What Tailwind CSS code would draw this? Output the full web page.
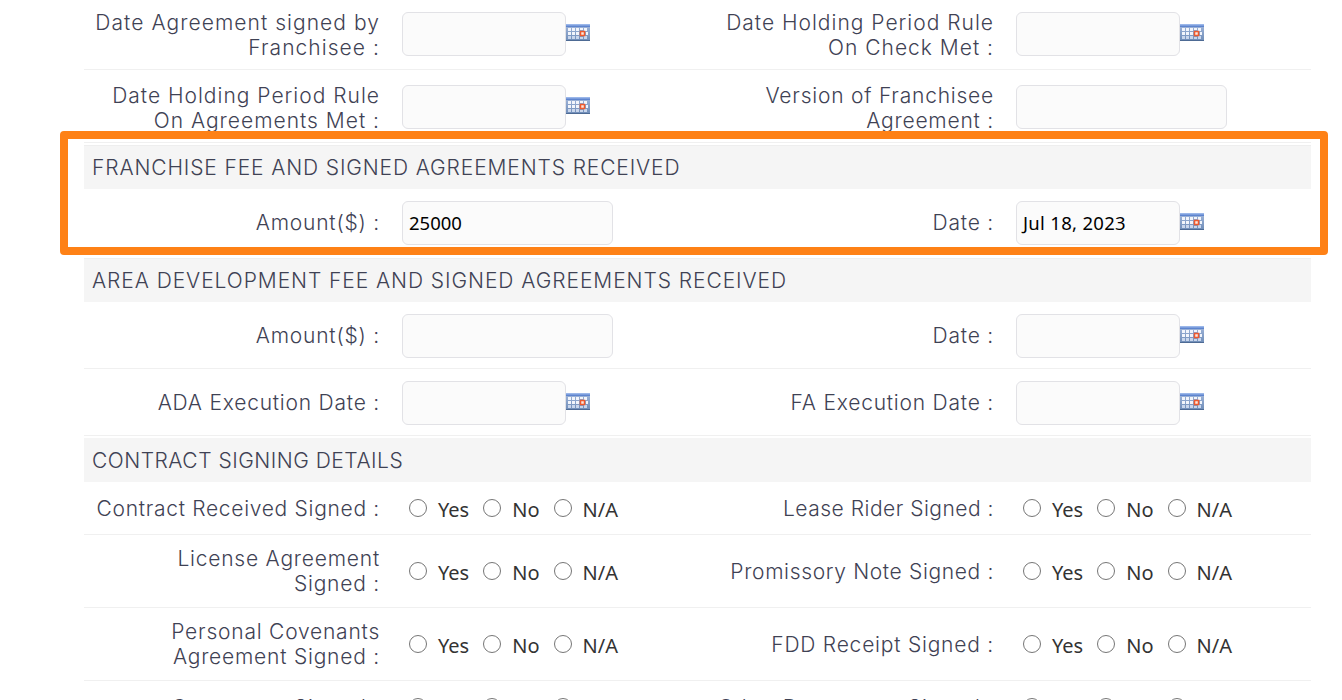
<!DOCTYPE html>
<html lang="en">

<head>
    <meta charset="UTF-8">
    <title>Franchise Agreements</title>
    <script src="https://cdn.jsdelivr.net/npm/@tailwindcss/browser@4"></script>
</head>

<body class="bg-white h-[700px] overflow-hidden relative">
    <svg width="0" height="0" class="absolute">
        <defs>
            <linearGradient id="calBody" x1="0" y1="0" x2="0" y2="1">
                <stop offset="0" stop-color="#a3b8dc" />
                <stop offset="1" stop-color="#6f8db8" />
            </linearGradient>
            <linearGradient id="calTop" x1="0" y1="0" x2="0" y2="1">
                <stop offset="0" stop-color="#a9c3f0" />
                <stop offset="1" stop-color="#4f78c8" />
            </linearGradient>
            <symbol id="cal" viewBox="0 0 24 17">
                <rect x="0" y="0" width="24" height="17" fill="url(#calBody)" />
                <rect x="0" y="0" width="24" height="3" fill="url(#calTop)" />
                <g fill="#f2f5fb">
                    <rect x="2" y="4" width="3" height="3" /><rect x="6" y="4" width="3" height="3" /><rect x="10" y="4" width="3" height="3" /><rect x="14" y="4" width="3" height="2" /><rect x="18" y="4" width="3" height="3" />
                    <rect x="2" y="8" width="3" height="3" /><rect x="6" y="8" width="3" height="3" /><rect x="10" y="8" width="3" height="3" /><rect x="20" y="8" width="2" height="3" />
                </g>
                <g fill="#c9d6ec">
                    <rect x="2" y="12" width="3" height="3" /><rect x="6" y="12" width="3" height="3" /><rect x="10" y="12" width="3" height="3" /><rect x="14" y="13" width="3" height="2" /><rect x="18" y="12" width="3" height="3" />
                </g>
                <rect x="14.5" y="7.5" width="4" height="4" fill="#fde7dc" stroke="#ee5a2e" stroke-width="1.5" />
                <rect x="0" y="16" width="24" height="1" fill="#4d6a94" />
            </symbol>
        </defs>
    </svg>

    <!-- highlight box around the franchise fee section -->
    <div class="absolute left-[60px] top-[131px] w-[1268px] h-[124px] border-[8px] border-[#fe8116] rounded-[4px]"></div>

    <div class="ml-[84px] w-[1227px] font-['Inter',sans-serif] text-[21px] tracking-[0.78px] leading-[25px] font-light text-[#3f4254]">

        <div class="grid grid-cols-[318px_296px_318px_295px] h-[70px] pt-[12px] border-b border-[#f0f0f0]">
            <div class="text-right pr-[22px] -mt-[2px] tracking-[1.05px]">Date Agreement signed by<br>Franchisee :</div>
            <div class="flex"><div class="w-[164px] h-[44px] border border-[#e2e2e6] bg-[#fbfbfb] rounded-[6px]"></div><svg class="w-[24px] h-[17px] mt-[12px]"><use href="#cal" /></svg></div>
            <div class="text-right pr-[22px] -mt-[2px] tracking-[1px]">Date Holding Period Rule<br>On Check Met :</div>
            <div class="flex"><div class="w-[164px] h-[44px] border border-[#e2e2e6] bg-[#fbfbfb] rounded-[6px]"></div><svg class="w-[24px] h-[17px] mt-[12px]"><use href="#cal" /></svg></div>
        </div>

        <div class="grid grid-cols-[318px_296px_318px_295px] h-[73px] mb-[2px] pt-[15px] border-b border-[#f0f0f0]">
            <div class="text-right pr-[22px] -mt-[2px] tracking-[1px]">Date Holding Period Rule<br>On Agreements Met :</div>
            <div class="flex"><div class="w-[164px] h-[44px] border border-[#e2e2e6] bg-[#fbfbfb] rounded-[6px]"></div><svg class="w-[24px] h-[17px] mt-[12px]"><use href="#cal" /></svg></div>
            <div class="text-right pr-[22px] -mt-[2px]">Version of Franchisee<br>Agreement :</div>
            <div><div class="w-[211px] h-[44px] border border-[#e2e2e6] bg-[#fbfbfb] rounded-[6px]"></div></div>
        </div>

        <div class="h-[44px] bg-[#f5f5f5] border-t border-[#eeeeee] pl-[8px] pb-[1px] flex items-center tracking-[0.87px]">FRANCHISE FEE AND SIGNED AGREEMENTS RECEIVED</div>

        <div class="grid grid-cols-[318px_296px_318px_295px] h-[69px] pt-[12px]">
            <div class="text-right pr-[22px] pt-[9px]">Amount($) :</div>
            <div><div class="w-[211px] h-[44px] border border-[#e2e2e6] bg-[#fbfbfb] rounded-[6px] px-[6px] pb-[2px] flex items-center font-['Noto_Sans',sans-serif] font-normal tracking-normal text-[18.5px] text-black">25000</div></div>
            <div class="text-right pr-[22px] pt-[9px]">Date :</div>
            <div class="flex"><div class="w-[164px] h-[44px] border border-[#e2e2e6] bg-[#fbfbfb] rounded-[6px] px-[6px] pb-[2px] flex items-center font-['Noto_Sans',sans-serif] font-normal tracking-[0.3px] text-[18.5px] text-black">Jul 18, 2023</div><svg class="w-[24px] h-[17px] mt-[12px]"><use href="#cal" /></svg></div>
        </div>

        <div class="h-[44px] bg-[#f5f5f5] border-t border-[#eeeeee] pl-[8px] pb-[1px] flex items-center tracking-[0.93px]">AREA DEVELOPMENT FEE AND SIGNED AGREEMENTS RECEIVED</div>

        <div class="grid grid-cols-[318px_296px_318px_295px] h-[67px] pt-[12px] border-b border-[#f0f0f0]">
            <div class="text-right pr-[22px] pt-[9px]">Amount($) :</div>
            <div><div class="w-[211px] h-[44px] border border-[#e2e2e6] bg-[#fbfbfb] rounded-[6px]"></div></div>
            <div class="text-right pr-[22px] pt-[9px]">Date :</div>
            <div class="flex"><div class="w-[164px] h-[44px] border border-[#e2e2e6] bg-[#fbfbfb] rounded-[6px]"></div><svg class="w-[24px] h-[17px] mt-[12px]"><use href="#cal" /></svg></div>
        </div>

        <div class="grid grid-cols-[318px_296px_318px_295px] h-[67px] mb-[2px] pt-[12px] border-b border-[#f0f0f0]">
            <div class="text-right pr-[22px] pt-[9px]">ADA Execution Date :</div>
            <div class="flex"><div class="w-[164px] h-[44px] border border-[#e2e2e6] bg-[#fbfbfb] rounded-[6px]"></div><svg class="w-[24px] h-[17px] mt-[12px]"><use href="#cal" /></svg></div>
            <div class="text-right pr-[22px] pt-[9px]">FA Execution Date :</div>
            <div class="flex"><div class="w-[164px] h-[44px] border border-[#e2e2e6] bg-[#fbfbfb] rounded-[6px]"></div><svg class="w-[24px] h-[17px] mt-[12px]"><use href="#cal" /></svg></div>
        </div>

        <div class="h-[44px] bg-[#f5f5f5] pl-[8px] flex items-center tracking-[0.5px]">CONTRACT SIGNING DETAILS</div>

        <div class="grid grid-cols-[318px_296px_318px_295px] h-[53px] items-center border-b border-[#f0f0f0]">
            <div class="text-right pr-[22px] tracking-[0.7px]">Contract Received Signed :</div>
            <div class="flex items-center gap-[14px] pl-[7px] pt-[2px] font-['Noto_Sans',sans-serif] font-normal tracking-normal text-[20px] text-[#333]"><label class="flex items-center gap-[11px]"><span class="w-[18px] h-[18px] -mt-[3px] rounded-full border border-[#767676]"></span>Yes</label><label class="flex items-center gap-[11px]"><span class="w-[18px] h-[18px] -mt-[3px] rounded-full border border-[#767676]"></span>No</label><label class="flex items-center gap-[11px]"><span class="w-[18px] h-[18px] -mt-[3px] rounded-full border border-[#767676]"></span>N/A</label></div>
            <div class="text-right pr-[22px] tracking-[0.5px]">Lease Rider Signed :</div>
            <div class="flex items-center gap-[14px] pl-[7px] pt-[2px] font-['Noto_Sans',sans-serif] font-normal tracking-normal text-[20px] text-[#333]"><label class="flex items-center gap-[11px]"><span class="w-[18px] h-[18px] -mt-[3px] rounded-full border border-[#767676]"></span>Yes</label><label class="flex items-center gap-[11px]"><span class="w-[18px] h-[18px] -mt-[3px] rounded-full border border-[#767676]"></span>No</label><label class="flex items-center gap-[11px]"><span class="w-[18px] h-[18px] -mt-[3px] rounded-full border border-[#767676]"></span>N/A</label></div>
        </div>

        <div class="grid grid-cols-[318px_296px_318px_295px] h-[73px] items-center border-b border-[#f0f0f0]">
            <div class="text-right pr-[22px]">License Agreement<br>Signed :</div>
            <div class="flex items-center gap-[14px] pl-[7px] pt-[2px] font-['Noto_Sans',sans-serif] font-normal tracking-normal text-[20px] text-[#333]"><label class="flex items-center gap-[11px]"><span class="w-[18px] h-[18px] -mt-[3px] rounded-full border border-[#767676]"></span>Yes</label><label class="flex items-center gap-[11px]"><span class="w-[18px] h-[18px] -mt-[3px] rounded-full border border-[#767676]"></span>No</label><label class="flex items-center gap-[11px]"><span class="w-[18px] h-[18px] -mt-[3px] rounded-full border border-[#767676]"></span>N/A</label></div>
            <div class="text-right pr-[22px] tracking-[0.65px]">Promissory Note Signed :</div>
            <div class="flex items-center gap-[14px] pl-[7px] pt-[2px] font-['Noto_Sans',sans-serif] font-normal tracking-normal text-[20px] text-[#333]"><label class="flex items-center gap-[11px]"><span class="w-[18px] h-[18px] -mt-[3px] rounded-full border border-[#767676]"></span>Yes</label><label class="flex items-center gap-[11px]"><span class="w-[18px] h-[18px] -mt-[3px] rounded-full border border-[#767676]"></span>No</label><label class="flex items-center gap-[11px]"><span class="w-[18px] h-[18px] -mt-[3px] rounded-full border border-[#767676]"></span>N/A</label></div>
        </div>

        <div class="grid grid-cols-[318px_296px_318px_295px] h-[73px] items-center border-b border-[#f0f0f0]">
            <div class="text-right pr-[22px]">Personal Covenants<br>Agreement Signed :</div>
            <div class="flex items-center gap-[14px] pl-[7px] pt-[2px] font-['Noto_Sans',sans-serif] font-normal tracking-normal text-[20px] text-[#333]"><label class="flex items-center gap-[11px]"><span class="w-[18px] h-[18px] -mt-[3px] rounded-full border border-[#767676]"></span>Yes</label><label class="flex items-center gap-[11px]"><span class="w-[18px] h-[18px] -mt-[3px] rounded-full border border-[#767676]"></span>No</label><label class="flex items-center gap-[11px]"><span class="w-[18px] h-[18px] -mt-[3px] rounded-full border border-[#767676]"></span>N/A</label></div>
            <div class="text-right pr-[22px]">FDD Receipt Signed :</div>
            <div class="flex items-center gap-[14px] pl-[7px] pt-[2px] font-['Noto_Sans',sans-serif] font-normal tracking-normal text-[20px] text-[#333]"><label class="flex items-center gap-[11px]"><span class="w-[18px] h-[18px] -mt-[3px] rounded-full border border-[#767676]"></span>Yes</label><label class="flex items-center gap-[11px]"><span class="w-[18px] h-[18px] -mt-[3px] rounded-full border border-[#767676]"></span>No</label><label class="flex items-center gap-[11px]"><span class="w-[18px] h-[18px] -mt-[3px] rounded-full border border-[#767676]"></span>N/A</label></div>
        </div>

        <div class="grid grid-cols-[318px_296px_318px_295px] h-[53px] items-center">
            <div class="text-right pr-[22px]">Guarantors Signed :</div>
            <div class="flex items-center gap-[14px] pl-[7px] pt-[2px] font-['Noto_Sans',sans-serif] font-normal tracking-normal text-[20px] text-[#333]"><label class="flex items-center gap-[11px]"><span class="w-[18px] h-[18px] -mt-[3px] rounded-full border border-[#767676]"></span>Yes</label><label class="flex items-center gap-[11px]"><span class="w-[18px] h-[18px] -mt-[3px] rounded-full border border-[#767676]"></span>No</label><label class="flex items-center gap-[11px]"><span class="w-[18px] h-[18px] -mt-[3px] rounded-full border border-[#767676]"></span>N/A</label></div>
            <div class="text-right pr-[22px]">Other Documents Signed :</div>
            <div class="flex items-center gap-[14px] pl-[7px] pt-[2px] font-['Noto_Sans',sans-serif] font-normal tracking-normal text-[20px] text-[#333]"><label class="flex items-center gap-[11px]"><span class="w-[18px] h-[18px] -mt-[3px] rounded-full border border-[#767676]"></span>Yes</label><label class="flex items-center gap-[11px]"><span class="w-[18px] h-[18px] -mt-[3px] rounded-full border border-[#767676]"></span>No</label><label class="flex items-center gap-[11px]"><span class="w-[18px] h-[18px] -mt-[3px] rounded-full border border-[#767676]"></span>N/A</label></div>
        </div>
    </div>
</body>

</html>
